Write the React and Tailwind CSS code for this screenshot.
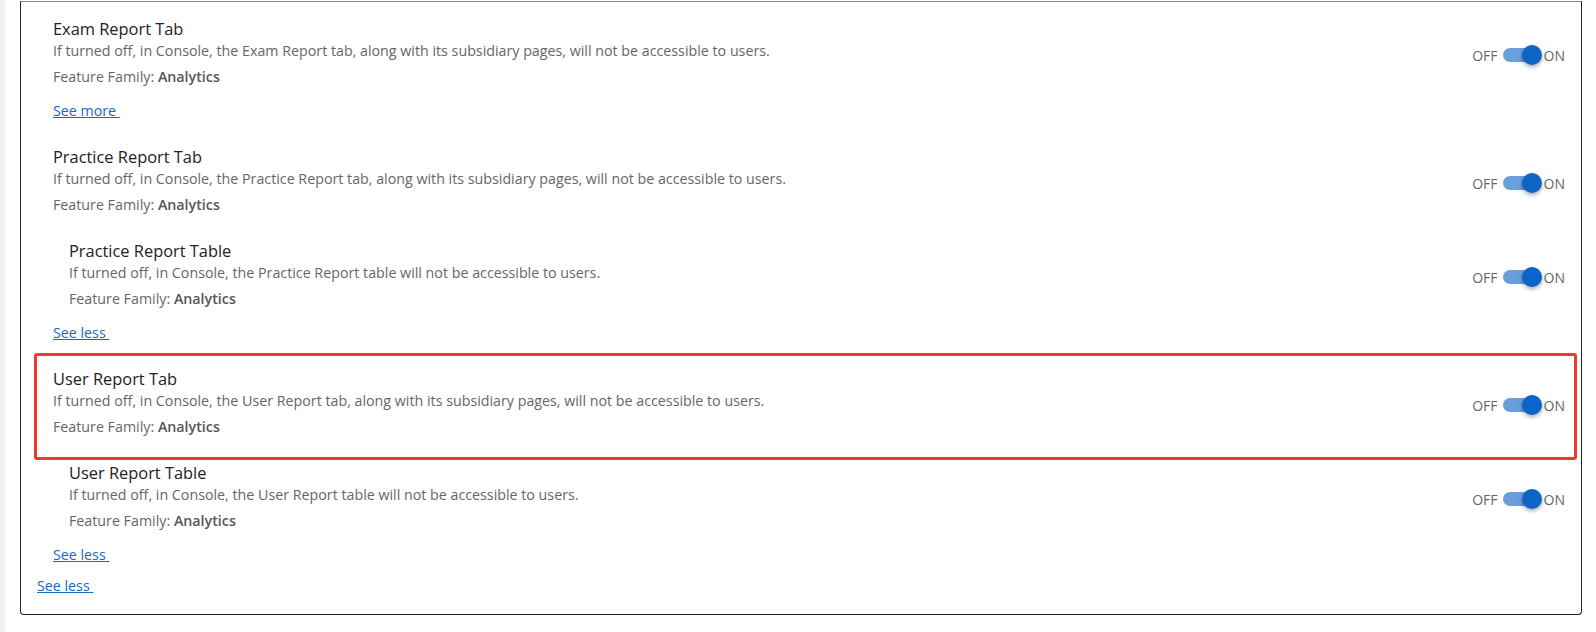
import React from 'react';

const FONT = { fontFamily: '"Open Sans", "Noto Sans", Arial, sans-serif' };

function Toggle() {
  return (
    <div className="flex items-center pt-[4px] text-[14px] text-[#666]">
      <span>OFF</span>
      <div className="relative ml-[5px] mr-[3px] h-[14px] w-[38px] rounded-full bg-[#6a9fdc]">
        <div className="absolute right-[-1px] top-[-3px] h-[20px] w-[20px] rounded-full bg-[#0d63c6] shadow-[0_2px_4px_rgba(0,0,0,0.35)]" />
      </div>
      <span>ON</span>
    </div>
  );
}

function Feature({ title, desc, nested, highlight }) {
  return (
    <div className={`relative flex items-center justify-between ${nested ? 'pl-8' : 'pl-4'}`}>
      {highlight && (
        <div className="pointer-events-none absolute -top-[15px] -bottom-[22px] -left-[3px] -right-[12px] rounded-[3px] border-[3px] border-[#ef3a2f]" />
      )}
      <div>
        <div className="text-[16.4px] leading-[22px] text-[#222]">{title}</div>
        <div className="text-[14.25px] leading-[22px] text-[#666]">{desc}</div>
        <div className="mt-[4px] text-[14.25px] leading-[22px] text-[#666]">
          Feature Family: <span className="font-semibold text-[#555]">Analytics</span>
        </div>
      </div>
      <Toggle />
    </div>
  );
}

function Link({ children, indent }) {
  return (
    <div className={indent ? 'pl-4' : ''}>
      <a className="text-[14.25px] leading-[22px] text-[#1469c7] underline">{children}&nbsp;</a>
    </div>
  );
}

export default function App() {
  return (
    <div className="flex h-[632px] w-[1596px] bg-white" style={FONT}>
      <div className="w-[5px] bg-[#f1f1f1]" />
      <div className="ml-[15px] mr-[14px] mt-[1px] h-[614px] flex-1 rounded-b-[4px] border border-[#222] border-t-[#888] pl-4 pr-4 pt-[16px]">
        <Feature
          title="Exam Report Tab"
          desc="If turned off, in Console, the Exam Report tab, along with its subsidiary pages, will not be accessible to users."
        />
        <div className="mt-[10px]">
          <Link indent>See more</Link>
        </div>
        <div className="mt-[24px]">
          <Feature
            title="Practice Report Tab"
            desc="If turned off, in Console, the Practice Report tab, along with its subsidiary pages, will not be accessible to users."
          />
        </div>
        <div className="mt-[24px]">
          <Feature
            nested
            title="Practice Report Table"
            desc="If turned off, in Console, the Practice Report table will not be accessible to users."
          />
        </div>
        <div className="mt-[10px]">
          <Link indent>See less</Link>
        </div>
        <div className="mt-[24px]">
          <Feature
            highlight
            title="User Report Tab"
            desc="If turned off, in Console, the User Report tab, along with its subsidiary pages, will not be accessible to users."
          />
        </div>
        <div className="mt-[24px]">
          <Feature
            nested
            title="User Report Table"
            desc="If turned off, in Console, the User Report table will not be accessible to users."
          />
        </div>
        <div className="mt-[10px]">
          <Link indent>See less</Link>
        </div>
        <div className="mt-[7px]">
          <Link>See less</Link>
        </div>
      </div>
    </div>
  );
}
